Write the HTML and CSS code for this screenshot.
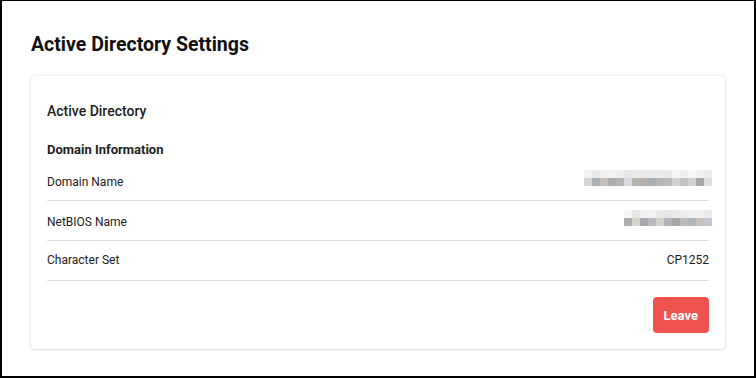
FILE: index.html
```html
<!DOCTYPE html>
<html lang="en">
<head>
  <meta charset="UTF-8" />
  <meta name="viewport" content="width=device-width, initial-scale=1.0" />
  <title>Active Directory Settings</title>
  <link rel="stylesheet" href="styles.css">
</head>
<body>
  <div class="page">
    <h1>Active Directory Settings</h1>
    <div class="card">
      <h2>Active Directory</h2>
      <h3>Domain Information</h3>
      <div class="row">
        <span>Domain Name</span>
        <span class="masked masked-domain"></span>
      </div>
      <div class="row">
        <span>NetBIOS Name</span>
        <span class="masked masked-netbios"></span>
      </div>
      <div class="row">
        <span>Character Set</span>
        <span>CP1252</span>
      </div>
      <div class="actions">
        <button class="leave">Leave</button>
      </div>
    </div>
  </div>
</body>
</html>
```
FILE: styles.css
```css
* {
  box-sizing: border-box;
}
body {
  margin: 0;
  font-family: Roboto, "Liberation Sans", Arial, sans-serif;
  color: #212121;
  background: #fff;
}
.page {
  height: 378px;
  border: 2px solid #000;
  border-top-width: 1px;
  padding: 30px 29px 0;
}
h1 {
  margin: 0;
  font-size: 19.5px;
  line-height: 28px;
  font-weight: 700;
  color: #111;
}
.card {
  margin-top: 17px;
  background: #fff;
  border-radius: 4px;
  box-shadow: 0 0 3px rgba(0, 0, 0, 0.14), 0 1px 2px rgba(0, 0, 0, 0.08);
  padding: 23px 16px 16px;
}
h2 {
  margin: 0;
  font-size: 14px;
  line-height: 24px;
  font-weight: 500;
}
h3 {
  margin: 17px 0 0;
  font-size: 13px;
  line-height: 20px;
  font-weight: 700;
}
.row {
  display: flex;
  justify-content: space-between;
  align-items: baseline;
  height: 40px;
  padding-top: 9px;
  font-size: 12px;
  line-height: 20px;
  border-bottom: 1px solid #e0e0e0;
}
.row:first-of-type {
  height: 41px;
  padding-top: 10px;
}
.masked {
  display: inline-block;
  height: 16px;
  margin-right: -3px;
}
.masked-domain {
  width: 128px;
  background:
    linear-gradient(to right, #f3f3f3 0 8px, #e9e9e9 8px 16px, #f0f0f0 16px 24px, #f5f3f2 24px 32px, #eceef0 32px 40px, #e6e6e6 40px 48px, #ececec 48px 56px, #ebe8e6 56px 64px, #ebebeb 64px 72px, #ececec 72px 80px, #eaeaea 80px 88px, #f5f5f5 88px 96px, #eeeeee 96px 104px, #f8f8f8 104px 112px, #f2f2f2 112px 120px, #ededed 120px 128px) top / 100% 8px no-repeat,
    linear-gradient(to right, #d8d6d4 0 8px, #aeb0b3 8px 16px, #c4bfb9 16px 24px, #adadad 24px 32px, #b5b5b5 32px 40px, #d9dade 40px 48px, #b7b3b0 48px 56px, #b4b0ad 56px 64px, #a9aeb3 64px 72px, #b8b6b3 72px 80px, #babab8 80px 88px, #d0d2d5 88px 96px, #c2c2c2 96px 104px, #d2d1cf 104px 112px, #a8a8a8 112px 120px, #e0e0e3 120px 128px) bottom / 100% 8px no-repeat;
}
.masked-netbios {
  width: 88px;
  background:
    linear-gradient(to right, #f7f7f7 0 8px, #e6e6e6 8px 16px, #f2f2f2 16px 24px, #f3f3f3 24px 32px, #e9e9e9 32px 40px, #e6e6e6 40px 48px, #ebebeb 48px 56px, #eeeeee 56px 64px, #f0f0f0 64px 72px, #f0f0f0 72px 80px, #ececec 80px 88px) top / 100% 8px no-repeat,
    linear-gradient(to right, #adadad 0 8px, #d8d3cb 8px 16px, #a9a8ad 16px 24px, #b8bcbf 24px 32px, #d1d0cb 32px 40px, #b3b3bf 40px 48px, #a8a7a5 48px 56px, #bcbcbc 56px 64px, #b4b7b9 64px 72px, #c8c2bb 72px 80px, #c3c7cd 80px 88px) bottom / 100% 8px no-repeat;
}
.actions {
  display: flex;
  justify-content: flex-end;
  margin-top: 16px;
}
.leave {
  height: 36px;
  padding: 0 11px;
  border: none;
  border-radius: 4px;
  background: #ef5350;
  color: #fff;
  font-family: inherit;
  font-size: 13px;
  font-weight: 700;
}
```
